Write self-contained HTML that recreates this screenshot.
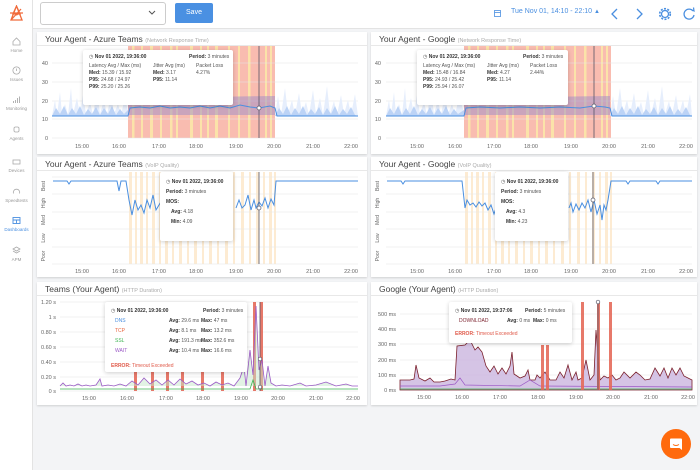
<!DOCTYPE html>
<html><head><meta charset="utf-8"><style>
*{margin:0;padding:0;box-sizing:border-box}
body{width:700px;height:470px;background:#f3f4f6;font-family:"Liberation Sans",sans-serif;position:relative;overflow:hidden;color:#333}
.abs{position:absolute}
.side{left:0;top:0;width:33px;height:470px;background:#fff;border-right:1px solid #e3e3e3}
.top{left:33px;top:0;width:667px;height:29px;background:#fff;border-bottom:1px solid #e3e3e3}
.nav{position:absolute;left:0;width:33px;text-align:center;font-size:4.5px;color:#999}
.nav svg{display:block;margin:0 auto 2px}
.panel{position:absolute;background:#fff;box-shadow:0 1px 2px rgba(0,0,0,.15)}
.ttl{position:absolute;font-size:8.5px;color:#444;white-space:nowrap}
.ttl small{font-size:5.5px;color:#aaa}
.hr{position:absolute;height:1px;background:#e8e8e8}
.tip{position:absolute;background:#fff;border-radius:2px;box-shadow:0 1px 4px rgba(0,0,0,.2);font-size:5px;color:#555;line-height:7px;white-space:nowrap}
.tip *{white-space:nowrap}
.tip b{color:#333}
</style></head><body>
<div class="abs side"></div>
<div class="abs top"></div>
<svg class="abs" style="left:8px;top:5px" width="17" height="17" viewBox="0 0 17 17"><path d="M8.5 1L3 15h11z M8.5 1L5 9h7z M2 8l13 0 M3 15l10-11" stroke="#f06a3a" stroke-width="1.3" fill="none"/><circle cx="8.5" cy="9" r="1.5" fill="#f06a3a"/></svg>
<div class="nav" style="top:37px"><svg width="9" height="9" viewBox="0 0 9 9"><path d="M1 4.5L4.5 1 8 4.5V8H1z" fill="none" stroke="#aaa" stroke-width=".8"/></svg>Home</div>
<div class="nav" style="top:66px"><svg width="9" height="9" viewBox="0 0 9 9"><circle cx="4.5" cy="4.5" r="3.6" fill="none" stroke="#aaa" stroke-width=".8"/><path d="M4.5 2.5v2.5" stroke="#aaa" stroke-width=".8"/></svg>Issues</div>
<div class="nav" style="top:95px"><svg width="9" height="9" viewBox="0 0 9 9"><path d="M1.5 8V6M3.5 8V5M5.5 8V3M7.5 8V1.5" stroke="#aaa" stroke-width=".9"/></svg>Monitoring</div>
<div class="nav" style="top:125px"><svg width="9" height="9" viewBox="0 0 9 9"><rect x="2" y="2" width="5" height="5" rx="1.5" fill="none" stroke="#aaa" stroke-width=".8"/></svg>Agents</div>
<div class="nav" style="top:157px"><svg width="9" height="9" viewBox="0 0 9 9"><rect x="1" y="3" width="7" height="4" fill="none" stroke="#aaa" stroke-width=".8"/></svg>Devices</div>
<div class="nav" style="top:187px"><svg width="9" height="9" viewBox="0 0 9 9"><path d="M1.5 6.5A3.2 3.2 0 1 1 7.5 6.5" fill="none" stroke="#aaa" stroke-width=".8"/></svg>Speedtests</div>
<div class="nav" style="top:216px;color:#4a8fe0"><svg width="9" height="9" viewBox="0 0 9 9"><rect x="1" y="1.5" width="7" height="6" fill="none" stroke="#4a8fe0" stroke-width=".9"/><path d="M1 4h7M4.5 4v3.5" stroke="#4a8fe0" stroke-width=".9"/></svg>Dashboards</div>
<div class="nav" style="top:246px"><svg width="9" height="9" viewBox="0 0 9 9"><path d="M4.5 1L8 3 4.5 5 1 3z M1 5l3.5 2 3.5-2" fill="none" stroke="#aaa" stroke-width=".8"/></svg>APM</div>
<div class="abs" style="left:40px;top:2px;width:126px;height:23px;border:1px solid #ccc;border-radius:3px;background:#fff"></div>
<svg class="abs" style="left:148px;top:10px" width="8" height="6"><path d="M1 1l3 3 3-3" fill="none" stroke="#555" stroke-width="1"/></svg>
<div class="abs" style="left:175px;top:3px;width:38px;height:20px;background:#4a90e2;border-radius:2px;color:#fff;font-size:7px;text-align:center;line-height:20px">Save</div>
<svg class="abs" style="left:494px;top:9px" width="7" height="8"><rect x=".5" y="1.5" width="6" height="6" fill="none" stroke="#4a8fe0" stroke-width=".8"/><path d="M.5 3.5h6" stroke="#4a8fe0" stroke-width=".8"/></svg>
<div class="abs" style="left:511px;top:8px;font-size:7px;color:#4a8fe0;white-space:nowrap">Tue Nov 01, 14:10 - 22:10 <span style="font-size:6px">&#9650;</span></div>
<svg class="abs" style="left:608px;top:7px" width="90" height="14" viewBox="0 0 90 14"><path d="M9 2L4 7l5 5M29 2l5 5-5 5" fill="none" stroke="#4a8fe0" stroke-width="1.3"/><circle cx="57" cy="7" r="3.5" fill="none" stroke="#4a8fe0" stroke-width="1.3"/><circle cx="57" cy="7" r="5.3" fill="none" stroke="#4a8fe0" stroke-width="1.6" stroke-dasharray="2 1.4"/><path d="M85 4A5 5 0 1 0 86 8" fill="none" stroke="#4a8fe0" stroke-width="1.3"/><path d="M83 2.5l3 1.5-.5-3.5" fill="none" stroke="#4a8fe0" stroke-width="1.2"/></svg>

<div class="panel" style="left:37px;top:32px;width:330px;height:122px"></div>
<div class="panel" style="left:371px;top:32px;width:326px;height:122px"></div>
<div class="panel" style="left:37px;top:157px;width:330px;height:120px"></div>
<div class="panel" style="left:371px;top:157px;width:326px;height:120px"></div>
<div class="panel" style="left:37px;top:282px;width:330px;height:123px"></div>
<div class="panel" style="left:371px;top:282px;width:326px;height:123px"></div>
<div class="hr" style="left:37px;top:45px;width:330px"></div><div class="hr" style="left:371px;top:45px;width:326px"></div>
<div class="hr" style="left:37px;top:170px;width:330px"></div><div class="hr" style="left:371px;top:170px;width:326px"></div>
<div class="hr" style="left:37px;top:295px;width:330px"></div><div class="hr" style="left:371px;top:295px;width:326px"></div>
<div class="ttl" style="left:45px;top:34px">Your Agent - Azure Teams <small>(Network Response Time)</small></div>
<div class="ttl" style="left:379px;top:34px">Your Agent - Google <small>(Network Response Time)</small></div>
<div class="ttl" style="left:45px;top:159px">Your Agent - Azure Teams <small>(VoIP Quality)</small></div>
<div class="ttl" style="left:379px;top:159px">Your Agent - Google <small>(VoIP Quality)</small></div>
<div class="ttl" style="left:45px;top:284px">Teams (Your Agent) <small>(HTTP Duration)</small></div>
<div class="ttl" style="left:379px;top:284px">Google (Your Agent) <small>(HTTP Duration)</small></div>

<svg class="abs" style="left:0;top:0" width="700" height="470" font-family="Liberation Sans" font-size="5.5" fill="#666">
<defs>
<g id="stripes1"><rect x="0" y="0" width="147" height="92" fill="#f9bcb0"/><g fill="#fbe3a9"><rect x="4" width="2.5" height="92"/><rect x="13" width="2" height="92"/><rect x="22" width="3" height="92"/><rect x="32" width="2" height="92"/><rect x="42" width="2.5" height="92"/><rect x="48" width="2" height="92"/><rect x="62" width="3" height="92"/><rect x="72" width="2" height="92"/><rect x="79" width="2" height="92"/><rect x="87" width="3" height="92"/><rect x="100" width="2" height="92"/><rect x="110" width="2" height="92"/><rect x="120" width="2.5" height="92"/><rect x="137" width="2" height="92"/><rect x="142" width="2" height="92"/></g></g>
<g id="ostr" fill="#fdebd2"><rect x="0" width="3" height="92"/><rect x="6" width="2" height="92"/><rect x="11" width="3" height="92"/><rect x="17" width="2" height="92"/><rect x="23" width="3" height="92"/><rect x="30" width="2" height="92"/><rect x="36" width="3" height="92"/><rect x="43" width="2" height="92"/><rect x="50" width="3" height="92"/><rect x="58" width="2" height="92"/><rect x="65" width="3" height="92"/><rect x="73" width="2" height="92"/><rect x="80" width="3" height="92"/><rect x="88" width="2" height="92"/><rect x="96" width="3" height="92"/><rect x="104" width="2" height="92"/><rect x="112" width="3" height="92"/><rect x="120" width="2" height="92"/><rect x="127" width="3" height="92"/><rect x="134" width="2" height="92"/><rect x="140" width="3" height="92"/><rect x="145" width="2" height="92"/></g>
</defs>
<use href="#stripes1" x="128" y="46"/>
<g stroke="#e6e6e6" stroke-width=".6"><path d="M52 63H358M52 82H358M52 101H358M52 119H358M52 138H358"/></g>
<g text-anchor="end"><text x="48" y="65">40</text><text x="48" y="84">30</text><text x="48" y="103">20</text><text x="48" y="121">10</text><text x="48" y="140">0</text></g>
<path d="M52 116L55 100 57 115 60 92 62 114 65 104 68 115 71 88 73 114 77 98 80 115 83 95 86 114 90 102 93 115 97 90 100 114 104 100 107 115 111 94 114 114 118 104 121 115 125 97 128 112 V116Z M275 116L278 96 281 115 285 88 288 114 292 100 295 115 299 93 302 114 306 102 309 115 313 90 316 114 320 98 323 115 327 86 330 114 334 101 337 115 341 95 344 114 348 100 351 115 355 94 358 116Z" fill="#e6eefc"/>
<path d="M52 116L56 108 60 114 64 106 68 115 72 108 76 114 80 106 84 115 88 109 92 114 96 107 100 115 104 108 108 114 112 106 116 115 120 109 124 114 128 110V116Z M275 116L279 108 283 114 287 106 291 115 295 108 299 114 303 106 307 115 311 109 315 114 319 107 323 115 327 108 331 114 335 106 339 115 343 109 347 114 351 107 355 115 358 116Z" fill="#bcd3f6"/>
<path d="M128 98L275 96V115H128Z" fill="#9c8cc7" opacity=".5"/>
<path d="M52 116H128L130 108 140 107 150 108 160 106 170 108 180 107 190 108 200 106 210 108 220 106 230 108 240 105 250 107 259 108 270 106 275 108 277 116H358" fill="none" stroke="#4a8fe0" stroke-width="1"/>
<path d="M259 46V138" stroke="#556" stroke-width=".8"/><circle cx="259" cy="108" r="2" fill="#fff" stroke="#556" stroke-width=".7"/>
<g text-anchor="middle"><text x="82" y="148">15:00</text><text x="119" y="148">16:00</text><text x="159" y="148">17:00</text><text x="196" y="148">18:00</text><text x="236" y="148">19:00</text><text x="274" y="148">20:00</text><text x="313" y="148">21:00</text><text x="351" y="148">22:00</text></g>
<use href="#stripes1" x="464" y="46"/>
<g stroke="#e6e6e6" stroke-width=".6"><path d="M386 63H692M386 82H692M386 101H692M386 119H692M386 138H692"/></g>
<g text-anchor="end"><text x="381" y="65">40</text><text x="381" y="84">30</text><text x="381" y="103">20</text><text x="381" y="121">10</text><text x="381" y="140">0</text></g>
<path d="M386 116L389 100 391 115 394 92 396 114 399 104 402 115 405 88 407 114 411 98 414 115 417 95 420 114 424 102 427 115 431 90 434 114 438 100 441 115 445 94 448 114 452 104 455 115 459 97 464 112V116Z M610 116L613 96 616 115 620 88 623 114 627 100 630 115 634 93 637 114 641 102 644 115 648 90 651 114 655 98 658 115 662 86 665 114 669 101 672 115 676 95 679 114 683 100 686 115 690 94 692 116Z" fill="#e6eefc"/>
<path d="M386 116L390 108 394 114 398 106 402 115 406 108 410 114 414 106 418 115 422 109 426 114 430 107 434 115 438 108 442 114 446 106 450 115 454 109 458 114 464 110V116Z M610 116L614 108 618 114 622 106 626 115 630 108 634 114 638 106 642 115 646 109 650 114 654 107 658 115 662 108 666 114 670 106 674 115 678 109 682 114 686 107 690 115 692 116Z" fill="#bcd3f6"/>
<path d="M464 98L610 96V115H464Z" fill="#9c8cc7" opacity=".5"/>
<path d="M386 116H464L466 108 480 107 500 108 520 107 540 108 560 107 580 108 594 106 605 107 610 108 612 116H692" fill="none" stroke="#4a8fe0" stroke-width="1"/>
<path d="M594 46V138" stroke="#556" stroke-width=".8"/><circle cx="594" cy="106" r="2" fill="#fff" stroke="#556" stroke-width=".7"/>
<g text-anchor="middle"><text x="417" y="148">15:00</text><text x="455" y="148">16:00</text><text x="494" y="148">17:00</text><text x="531" y="148">18:00</text><text x="571" y="148">19:00</text><text x="609" y="148">20:00</text><text x="648" y="148">21:00</text><text x="686" y="148">22:00</text></g>
<use href="#ostr" x="129" y="172"/>
<g stroke="#e6e6e6" stroke-width=".6"><path d="M52 177H358M52 194H358M52 212H358M52 229H358M52 247H358M52 264H358"/></g>
<g font-size="5" text-anchor="middle"><text transform="translate(45,186) rotate(-90)">Best</text><text transform="translate(45,203) rotate(-90)">High</text><text transform="translate(45,220) rotate(-90)">Med</text><text transform="translate(45,238) rotate(-90)">Low</text><text transform="translate(45,256) rotate(-90)">Poor</text></g>
<path d="M53 181H67L69 184 71 181H117L119 191 121 181H126L129 200 132 215 135 200 138 210 141 205 144 213 147 200 150 208 153 195 156 210 159 205 162 200 165 206 168 203 172 206M236 208L239 200 242 208 245 205 248 195 251 210 254 200 256 208 259 202 262 206 265 198 268 208 271 199 274 205 276 181H358" fill="none" stroke="#4a8fe0" stroke-width="1"/>
<path d="M259 172V264" stroke="#556" stroke-width=".8"/><circle cx="259" cy="208" r="2" fill="#fff" stroke="#556" stroke-width=".7"/>
<g text-anchor="middle"><text x="82" y="273">15:00</text><text x="119" y="273">16:00</text><text x="159" y="273">17:00</text><text x="196" y="273">18:00</text><text x="236" y="273">19:00</text><text x="274" y="273">20:00</text><text x="313" y="273">21:00</text><text x="351" y="273">22:00</text></g>
<use href="#ostr" x="465" y="172"/>
<g stroke="#e6e6e6" stroke-width=".6"><path d="M386 177H692M386 194H692M386 212H692M386 229H692M386 247H692M386 264H692"/></g>
<g font-size="5" text-anchor="middle"><text transform="translate(379,186) rotate(-90)">Best</text><text transform="translate(379,203) rotate(-90)">High</text><text transform="translate(379,220) rotate(-90)">Med</text><text transform="translate(379,238) rotate(-90)">Low</text><text transform="translate(379,256) rotate(-90)">Poor</text></g>
<path d="M387 181H401L403 184 405 181H462L465 208 467 200 470 205 473 203 476 207 479 202 482 206 485 203 488 210 491 205 494 214 496 208M569 208L571 203 573 212 576 204 579 210 582 203 585 208 588 200 591 212 594 200 597 214 600 205 602 220 604 205 606 210 608 200 611 181H626L628 184 630 181H656L658 184 660 181H692" fill="none" stroke="#4a8fe0" stroke-width="1"/>
<path d="M593 172V264" stroke="#556" stroke-width=".8"/><circle cx="593" cy="200" r="2" fill="#fff" stroke="#556" stroke-width=".7"/>
<g text-anchor="middle"><text x="417" y="273">15:00</text><text x="455" y="273">16:00</text><text x="494" y="273">17:00</text><text x="531" y="273">18:00</text><text x="571" y="273">19:00</text><text x="609" y="273">20:00</text><text x="648" y="273">21:00</text><text x="686" y="273">22:00</text></g>
<g stroke="#e6e6e6" stroke-width=".6"><path d="M60 302H358M60 317H358M60 332H358M60 347H358M60 362H358M60 377H358M60 391H358"/></g>
<g text-anchor="end"><text x="56" y="304">1.20 s</text><text x="56" y="319">1 s</text><text x="56" y="334">0.80 s</text><text x="56" y="349">0.60 s</text><text x="56" y="364">0.40 s</text><text x="56" y="379">0.20 s</text><text x="56" y="393">0 s</text></g>
<g fill="#e56b5a" opacity=".9"><rect x="134" y="365" width="3" height="26"/><rect x="151" y="365" width="3" height="26"/><rect x="166" y="370" width="3" height="21"/><rect x="181" y="368" width="3" height="23"/><rect x="201" y="370" width="3" height="21"/><rect x="221" y="372" width="3" height="19"/><rect x="253" y="302" width="3" height="89"/><rect x="260" y="302" width="3" height="89"/></g>
<path d="M60 386L63 383 66 386 70 385 74 386 78 384 82 386 86 385 90 386 96 385 100 379 102 386 108 385 114 386 120 384 126 386 132 381 138 385 144 378 150 384 156 380 162 385 168 380 174 385 180 379 186 384 192 381 198 385 204 383 210 386 216 382 222 385 228 383 234 386 240 378 244 366 246 386 250 350 253 375 256 306 259 370 262 360 265 386 268 366 271 383 276 386 282 385 290 386 300 383 306 386 316 385 326 382 336 386 346 384 352 386 358 386" fill="#c6e7c9" fill-opacity=".5" stroke="#9b59c6" stroke-width=".8"/>
<path d="M60 389H250L253 380 256 389H358" fill="none" stroke="#3db553" stroke-width=".8"/>
<path d="M260 302V391" stroke="#556" stroke-width=".8"/><circle cx="260" cy="359" r="1.8" fill="#fff" stroke="#556" stroke-width=".7"/><circle cx="260" cy="387" r="1.8" fill="#fff" stroke="#556" stroke-width=".7"/>
<g text-anchor="middle"><text x="89" y="400">15:00</text><text x="127" y="400">16:00</text><text x="166" y="400">17:00</text><text x="203" y="400">18:00</text><text x="241" y="400">19:00</text><text x="278" y="400">20:00</text><text x="316" y="400">21:00</text><text x="353" y="400">22:00</text></g>
<g stroke="#e6e6e6" stroke-width=".6"><path d="M400 314H692M400 329H692M400 344H692M400 360H692M400 375H692M400 390H692"/></g>
<g text-anchor="end"><text x="396" y="316">500 ms</text><text x="396" y="331">400 ms</text><text x="396" y="346">300 ms</text><text x="396" y="362">200 ms</text><text x="396" y="377">100 ms</text><text x="396" y="392">0 ms</text></g>
<path d="M400 390V380L410 380 414 379 416 365 419 378 425 381 430 378 434 382 440 382 445 381 451 379 455 380 457 346 465 345 470 340 475 350 478 347 482 352 486 366 490 372 494 366 498 374 502 368 506 374 510 366 512 352 514 374 520 378 525 376 528 370 530 380 535 380 537 375 540 378 545 372 550 380 556 380 560 372 564 378 568 365 572 380 576 372 578 380 582 378 586 360 590 380 594 375 596 330 600 380 604 376 608 378 612 375 616 380 620 378 624 372 630 378 636 372 640 375 645 380 650 379 655 368 660 376 664 368 668 378 672 368 676 375 680 368 684 376 688 378 692 380V390Z" fill="#c7b0dc" fill-opacity=".75" stroke="#7a1f2b" stroke-width=".8"/>
<path d="M400 386L440 386 455 384 460 378 465 385 520 386 530 380 540 386 692 387" fill="none" stroke="#9b59c6" stroke-width=".7"/>
<path d="M400 389H692" fill="none" stroke="#3db553" stroke-width=".8"/>
<g fill="#e56b5a" opacity=".9"><rect x="541" y="345" width="3" height="45"/><rect x="546" y="345" width="3" height="45"/><rect x="581" y="302" width="3" height="88"/><rect x="597" y="302" width="3" height="88"/><rect x="609" y="302" width="3" height="88"/></g>
<path d="M598 300V390" stroke="#556" stroke-width=".8"/><circle cx="598" cy="302" r="1.8" fill="#fff" stroke="#556" stroke-width=".7"/>
<g text-anchor="middle"><text x="424" y="399">15:00</text><text x="462" y="399">16:00</text><text x="500" y="399">17:00</text><text x="538" y="399">18:00</text><text x="576" y="399">19:00</text><text x="613" y="399">20:00</text><text x="651" y="399">21:00</text><text x="688" y="399">22:00</text></g>
</svg>

<div class="tip" style="left:83px;top:50px;width:150px;height:55px;padding:4px 6px">
<div style="position:relative">&#9719; <b>Nov 01 2022, 19:36:00</b><span style="position:absolute;left:100px"><b>Period:</b> 3 minutes</span></div>
<div style="position:relative;margin-top:2px">Latency Avg / Max (ms)<span style="position:absolute;left:64px">Jitter Avg (ms)</span><span style="position:absolute;left:107px">Packet Loss</span></div>
<div style="position:relative"><b>Med:</b> 15.39 / 15.92<span style="position:absolute;left:64px"><b>Med:</b> 3.17</span><span style="position:absolute;left:107px">4.27%</span></div>
<div style="position:relative"><b>P95:</b> 24.68 / 24.97<span style="position:absolute;left:64px"><b>P95:</b> 11.14</span></div>
<div><b>P99:</b> 25.20 / 25.26</div></div>
<div class="tip" style="left:417px;top:50px;width:151px;height:55px;padding:4px 6px">
<div style="position:relative">&#9719; <b>Nov 01 2022, 19:36:00</b><span style="position:absolute;left:100px"><b>Period:</b> 3 minutes</span></div>
<div style="position:relative;margin-top:2px">Latency Avg / Max (ms)<span style="position:absolute;left:64px">Jitter Avg (ms)</span><span style="position:absolute;left:107px">Packet Loss</span></div>
<div style="position:relative"><b>Med:</b> 15.48 / 16.84<span style="position:absolute;left:64px"><b>Med:</b> 4.27</span><span style="position:absolute;left:107px">2.44%</span></div>
<div style="position:relative"><b>P95:</b> 24.93 / 25.42<span style="position:absolute;left:64px"><b>P95:</b> 11.14</span></div>
<div><b>P99:</b> 25.94 / 26.07</div></div>
<div class="tip" style="left:160px;top:172px;width:73px;height:69px;padding:5px 6px;line-height:10px">
<div>&#9719; <b>Nov 01 2022, 19:36:00</b></div><div><b>Period:</b> 3 minutes</div><div><b>MOS:</b></div><div style="padding-left:5px"><b>Avg:</b> 4.18</div><div style="padding-left:5px"><b>Min:</b> 4.09</div></div>
<div class="tip" style="left:495px;top:172px;width:73px;height:69px;padding:5px 6px;line-height:10px">
<div>&#9719; <b>Nov 01 2022, 19:36:00</b></div><div><b>Period:</b> 3 minutes</div><div><b>MOS:</b></div><div style="padding-left:5px"><b>Avg:</b> 4.3</div><div style="padding-left:5px"><b>Min:</b> 4.23</div></div>
<div class="tip" style="left:105px;top:302px;width:142px;height:70px;padding:4px 6px;line-height:10px">
<div style="position:relative">&#9719; <b>Nov 01 2022, 19:36:00</b><span style="position:absolute;left:92px"><b>Period:</b> 3 minutes</span></div>
<div style="position:relative;padding-left:4px;color:#4a8fe0">DNS<span style="position:absolute;left:58px;color:#555"><b>Avg:</b> 29.6 ms</span><span style="position:absolute;left:90px;color:#555"><b>Max:</b> 47 ms</span></div>
<div style="position:relative;padding-left:4px;color:#e8633d">TCP<span style="position:absolute;left:58px;color:#555"><b>Avg:</b> 8.1 ms</span><span style="position:absolute;left:90px;color:#555"><b>Max:</b> 13.2 ms</span></div>
<div style="position:relative;padding-left:4px;color:#3db553">SSL<span style="position:absolute;left:58px;color:#555"><b>Avg:</b> 191.3 ms</span><span style="position:absolute;left:90px;color:#555"><b>Max:</b> 352.6 ms</span></div>
<div style="position:relative;padding-left:4px;color:#9b59c6">WAIT<span style="position:absolute;left:58px;color:#555"><b>Avg:</b> 10.4 ms</span><span style="position:absolute;left:90px;color:#555"><b>Max:</b> 16.6 ms</span></div>
<div style="margin-top:5px;color:#e05a4a"><b style="color:#e05a4a">ERROR:</b> Timeout Exceeded</div></div>
<div class="tip" style="left:449px;top:302px;width:123px;height:41px;padding:4px 6px;line-height:10px">
<div style="position:relative">&#9719; <b>Nov 01 2022, 19:37:06</b><span style="position:absolute;left:70px"><b>Period:</b> 5 minutes</span></div>
<div style="position:relative;padding-left:4px;color:#7a1f2b">DOWNLOAD<span style="position:absolute;left:52px;color:#555"><b>Avg:</b> 0 ms &nbsp;<b>Max:</b> 0 ms</span></div>
<div style="margin-top:3px;color:#e05a4a"><b style="color:#e05a4a">ERROR:</b> Timeout Exceeded</div></div>

<div class="abs" style="left:661px;top:429px;width:30px;height:30px;border-radius:50%;background:#ff6a0d"></div>
<svg class="abs" style="left:669px;top:437px" width="14" height="14" viewBox="0 0 14 14"><path d="M2 1.5h10a1 1 0 0 1 1 1V13l-2.5-2H2a1 1 0 0 1-1-1V2.5a1 1 0 0 1 1-1z" fill="#fff"/><path d="M4 7.5q3 2 6 0" fill="none" stroke="#ff6a0d" stroke-width=".9"/></svg>
</body></html>
